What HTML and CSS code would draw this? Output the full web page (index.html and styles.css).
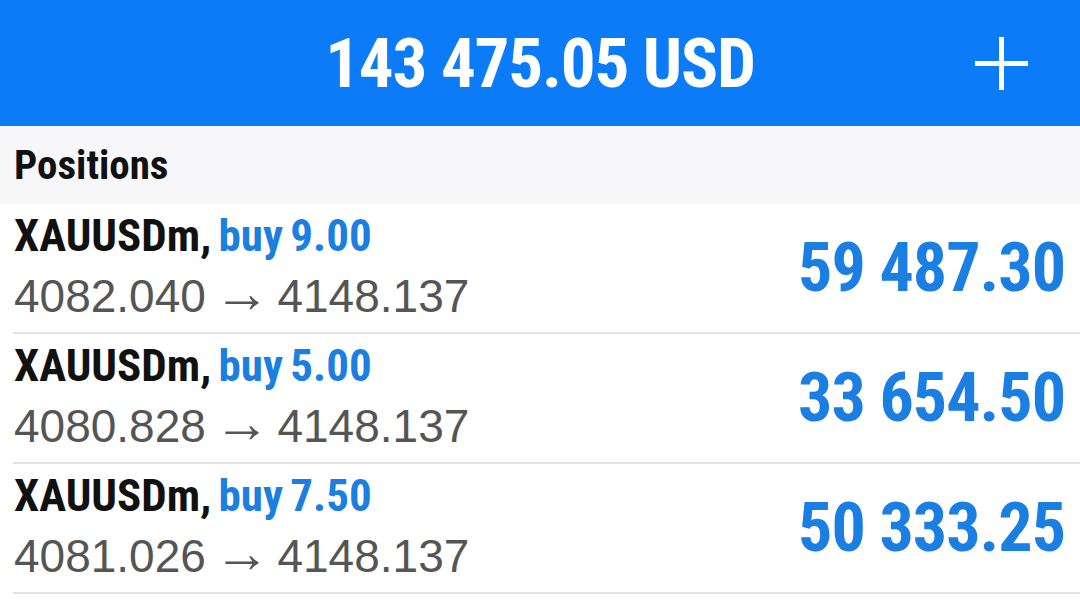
FILE: index.html
```html
<!DOCTYPE html>
<html lang="en">
<head>
    <meta charset="UTF-8">
    <meta name="viewport" content="width=device-width, initial-scale=1.0">
    <title>Trade</title>
    <link rel="stylesheet" href="styles.css">
</head>
<body>

<!-- Balance header -->
<header class="top-bar">
    <div></div>
    <h1 class="balance">143 475.05 USD</h1>
    <button class="add-btn" aria-label="New order">
        <svg width="53" height="53" viewBox="0 0 53 53">
            <path d="M26.5 0 V53 M0 26.5 H53" stroke="#fff" stroke-width="5" fill="none"/>
        </svg>
    </button>
</header>

<!-- Positions list -->
<div class="section-title">Positions</div>

<ul class="positions">
    <li class="position">
        <div class="info">
            <div class="symbol">XAUUSDm, <span class="side">buy 9.00</span></div>
            <div class="prices">4082.040 <span class="arrow">→</span> 4148.137</div>
        </div>
        <div class="profit">59 487.30</div>
    </li>
    <li class="position">
        <div class="info">
            <div class="symbol">XAUUSDm, <span class="side">buy 5.00</span></div>
            <div class="prices">4080.828 <span class="arrow">→</span> 4148.137</div>
        </div>
        <div class="profit">33 654.50</div>
    </li>
    <li class="position">
        <div class="info">
            <div class="symbol">XAUUSDm, <span class="side">buy 7.50</span></div>
            <div class="prices">4081.026 <span class="arrow">→</span> 4148.137</div>
        </div>
        <div class="profit">50 333.25</div>
    </li>
</ul>

</body>
</html>
```
FILE: styles.css
```css
/* General page settings */
body {
    margin: 0;
    background-color: #fff;
    font-family: "Roboto Condensed", "Liberation Sans", sans-serif;
    color: #111;
}

/* Blue balance bar */
.top-bar {
    height: 126px;
    background-color: #0b7bf7;
    display: grid;
    grid-template-columns: 1fr auto 1fr;
    align-items: center;
}

.balance {
    margin: 0;
    color: #fff;
    font-size: 69px;
    font-weight: bold;
    line-height: 1;
    letter-spacing: -1.2px;
}

.add-btn {
    justify-self: end;
    margin-right: 52px;
    padding: 0;
    border: none;
    background: none;
    display: flex;
}

/* Grey section header */
.section-title {
    height: 78px;
    background-color: #f7f7f9;
    padding-left: 14px;
    display: flex;
    align-items: center;
    font-size: 41px;
    font-weight: bold;
}

/* Position rows */
.positions {
    list-style: none;
    margin: 0;
    padding: 0;
}

.position {
    height: 130px;
    margin-left: 13px;
    padding-right: 15px;
    display: flex;
    justify-content: space-between;
    align-items: center;
    border-bottom: 2px solid #e3e3e5;
    box-sizing: border-box;
}

.info {
    padding-left: 1px;
}

.symbol {
    font-size: 45px;
    font-weight: bold;
    line-height: 44px;
    white-space: nowrap;
    word-spacing: -3px;
}

.side {
    color: #1a7fe0;
}

.prices {
    margin-top: 12px;
    font-family: "Liberation Sans", sans-serif;
    font-size: 46px;
    line-height: 52px;
    color: #555;
    white-space: nowrap;
}

.arrow {
    font-size: 56px;
    line-height: 0;
    margin: 0 -5px;
}

.profit {
    color: #1a7ee3;
    font-size: 68px;
    font-weight: bold;
    line-height: 1;
    letter-spacing: -1px;
}
```
